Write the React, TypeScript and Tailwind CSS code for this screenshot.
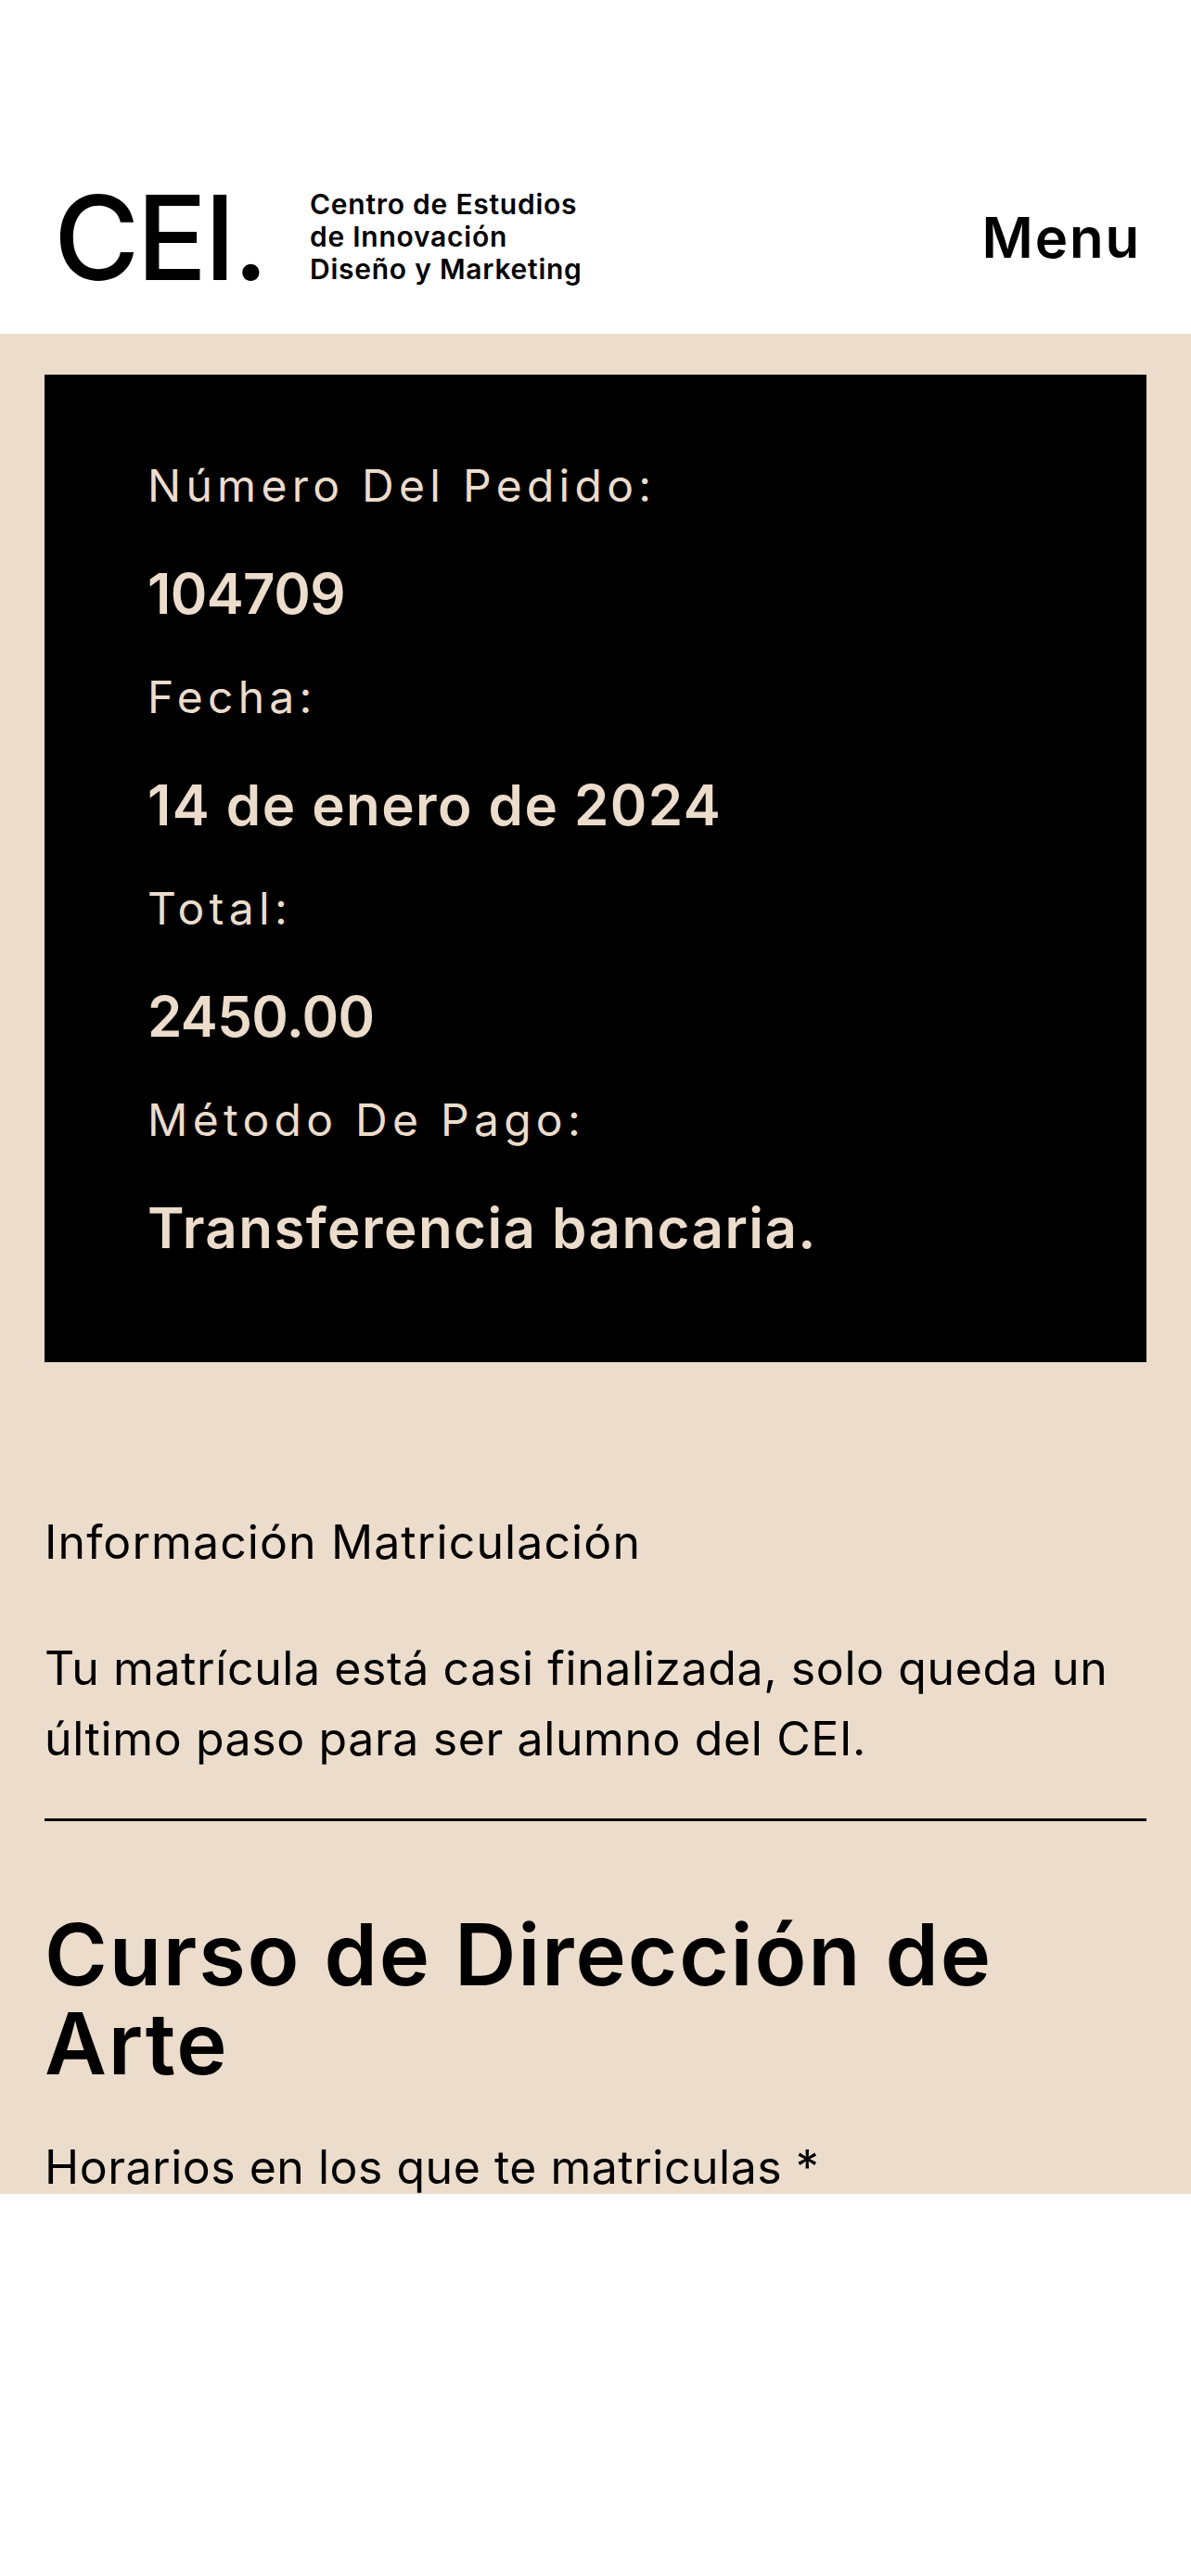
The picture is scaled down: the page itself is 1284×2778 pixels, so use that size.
const ORDER_DETAILS = [
  { label: "Número Del Pedido:", value: "104709", valueTracking: "tracking-[-0.01em]" },
  { label: "Fecha:", value: "14 de enero de 2024", valueTracking: "tracking-[0.024em]" },
  { label: "Total:", value: "2450.00", valueTracking: "tracking-[-0.01em]" },
  { label: "Método De Pago:", value: "Transferencia bancaria.", valueTracking: "tracking-[0.024em]" },
];

const FONT = "font-['Inter','Noto_Sans',sans-serif]";

function Header() {
  return (
    <header className="flex h-[360px] items-end justify-between bg-white pb-[52px] pl-[58px] pr-[54px]">
      <div className="flex items-center">
        <span className="w-[252px] text-[126px] font-medium leading-[96px] tracking-[-0.025em] text-black">CEI.</span>
        <div className="ml-[24px] text-[30px] font-semibold leading-[35px] tracking-[0.025em] text-black">
          <p>Centro de Estudios</p>
          <p>de Innovación</p>
          <p>Diseño y Marketing</p>
        </div>
      </div>
      <span className="mb-[20px] text-[60px] font-semibold leading-[64px] tracking-[0.03em] text-black">Menu</span>
    </header>
  );
}

function OrderSummary() {
  return (
    <div className="bg-black px-[111px] pb-[61px] pt-[92px] text-[#ecdccb]">
      {ORDER_DETAILS.map((item) => (
        <div key={item.label} className="h-[228px]">
          <p className="text-[48px] font-normal leading-[56px] tracking-[0.11em]">{item.label}</p>
          <p className={`mt-[52px] text-[60px] font-semibold leading-[72px] ${item.valueTracking}`}>{item.value}</p>
        </div>
      ))}
    </div>
  );
}

export default function App() {
  return (
    <div className={`${FONT} min-h-[2778px] bg-white`}>
      <Header />
      <main className="h-[2006px] overflow-hidden bg-[#ecdccb] px-[48px] pt-[44px] text-black">
        <OrderSummary />
        <h3 className="mt-[156px] text-[50px] font-normal leading-[76px] tracking-[0.022em]">Información Matriculación</h3>
        <p className="mt-[60px] text-[50px] font-normal leading-[76px] tracking-[0.012em]">
          Tu matrícula está casi finalizada, solo queda un último paso para ser alumno del CEI.
        </p>
        <hr className="mt-[48px] border-t-[3px] border-black" />
        <h2 className="mt-[96px] text-[92px] font-semibold leading-[96px] tracking-[0.02em]">Curso de Dirección de Arte</h2>
        <p className="mt-[47px] text-[50px] font-normal leading-[76px] tracking-[0.01em]">Horarios en los que te matriculas *</p>
      </main>
    </div>
  );
}
